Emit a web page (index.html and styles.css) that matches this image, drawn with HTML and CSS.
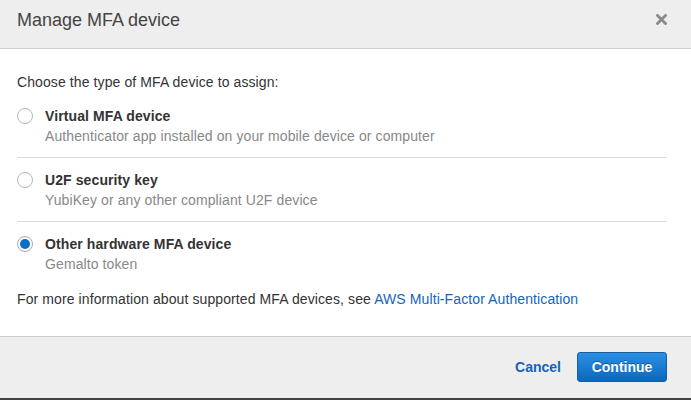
FILE: index.html
```html
<!DOCTYPE html>
<html>
<head>
<meta charset="utf-8">
<link rel="stylesheet" href="styles.css">
</head>
<body>
<div class="modal">
  <div class="modal-header">
    <h1 class="modal-title">Manage MFA device</h1>
    <button class="close" aria-label="Close">
      <svg width="11" height="11" viewBox="0 0 11 11"><path d="M1.5 1.5 L9.5 9.5 M9.5 1.5 L1.5 9.5" stroke="#8a8a8a" stroke-width="2.8" stroke-linecap="square"/></svg>
    </button>
  </div>
  <div class="modal-body">
    <p class="intro">Choose the type of MFA device to assign:</p>
    <div class="options">
      <label class="option">
        <span class="radio"></span>
        <span class="option-text">
          <span class="option-label">Virtual MFA device</span>
          <span class="option-desc">Authenticator app installed on your mobile device or computer</span>
        </span>
      </label>
      <label class="option">
        <span class="radio"></span>
        <span class="option-text">
          <span class="option-label">U2F security key</span>
          <span class="option-desc">YubiKey or any other compliant U2F device</span>
        </span>
      </label>
      <label class="option">
        <span class="radio checked"></span>
        <span class="option-text">
          <span class="option-label">Other hardware MFA device</span>
          <span class="option-desc">Gemalto token</span>
        </span>
      </label>
    </div>
    <p class="info">For more information about supported MFA devices, see <a href="#">AWS Multi-Factor Authentication</a></p>
  </div>
  <div class="modal-footer">
    <a class="btn-link" href="#">Cancel</a>
    <button class="btn-primary">Continue</button>
  </div>
</div>
</body>
</html>
```

FILE: styles.css
```css
* { box-sizing: border-box; }
html, body { margin: 0; padding: 0; }
body {
  width: 691px;
  height: 400px;
  background: #fff;
  font-family: "Liberation Sans", Arial, Helvetica, sans-serif;
  color: #333;
  overflow: hidden;
}
.modal {
  display: flex;
  flex-direction: column;
  height: 400px;
}
.modal-header {
  height: 49px;
  background: #eeeeee;
  border-bottom: 1px solid #cfcfcf;
  display: flex;
  align-items: flex-start;
  justify-content: space-between;
  padding: 8px 24px 0 17px;
}
.modal-title {
  margin: 0;
  font-size: 18px;
  line-height: 24px;
  font-weight: normal;
  color: #444;
}
.close {
  border: 0;
  background: none;
  padding: 0;
  margin-top: 6px;
  width: 11px;
  height: 11px;
  display: block;
}
.close svg { display: block; }
.modal-body {
  padding: 23px 24px 0 17px;
  height: 287px;
  letter-spacing: 0.1px;
}
.intro {
  margin: 0 0 3px;
  font-size: 14px;
  line-height: 20px;
  color: #333;
}
.option {
  display: flex;
  align-items: flex-start;
  gap: 12px;
  padding: 12px 0 11px 0;
  border-top: 1px solid #dcdcdc;
  font-size: 14px;
  line-height: 20px;
}
.option:first-child { border-top: 0; padding-top: 11px; }
.radio {
  flex: 0 0 16px;
  width: 16px;
  height: 16px;
  margin-top: 2px;
  border: 1px solid #b4b4b4;
  border-radius: 50%;
  background: #fff;
  position: relative;
}
.radio.checked {
  border-color: #a9a9a9;
}
.radio.checked::after {
  content: "";
  position: absolute;
  left: 2px;
  top: 2px;
  width: 10px;
  height: 10px;
  border-radius: 50%;
  background: #0b6ec5;
}
.option-text { display: flex; flex-direction: column; }
.option-label { font-weight: bold; color: #333; }
.option-desc { color: #888; }
.info {
  margin: 4px 0 0;
  font-size: 14px;
  line-height: 20px;
  color: #333;
}
.info a { color: #1166bb; text-decoration: none; }
.modal-footer {
  flex: 1;
  background: #eeeeee;
  border-top: 1px solid #cccccc;
  border-bottom: 2px solid #444;
  display: flex;
  justify-content: flex-end;
  align-items: flex-start;
  gap: 16px;
  padding: 15px 24px 0 0;
}
.btn-link {
  font-size: 14px;
  font-weight: bold;
  color: #1166bb;
  text-decoration: none;
  line-height: 30px;
}
.btn-primary {
  width: 90px;
  height: 30px;
  border: 1px solid #1a5e9c;
  border-radius: 3px;
  background: linear-gradient(#2c8fe3, #0a68bf);
  color: #fff;
  font-family: "Liberation Sans", Arial, sans-serif;
  font-size: 14px;
  font-weight: bold;
  text-shadow: 0 -1px 0 rgba(0,0,0,0.35);
  padding: 0;
}
```
